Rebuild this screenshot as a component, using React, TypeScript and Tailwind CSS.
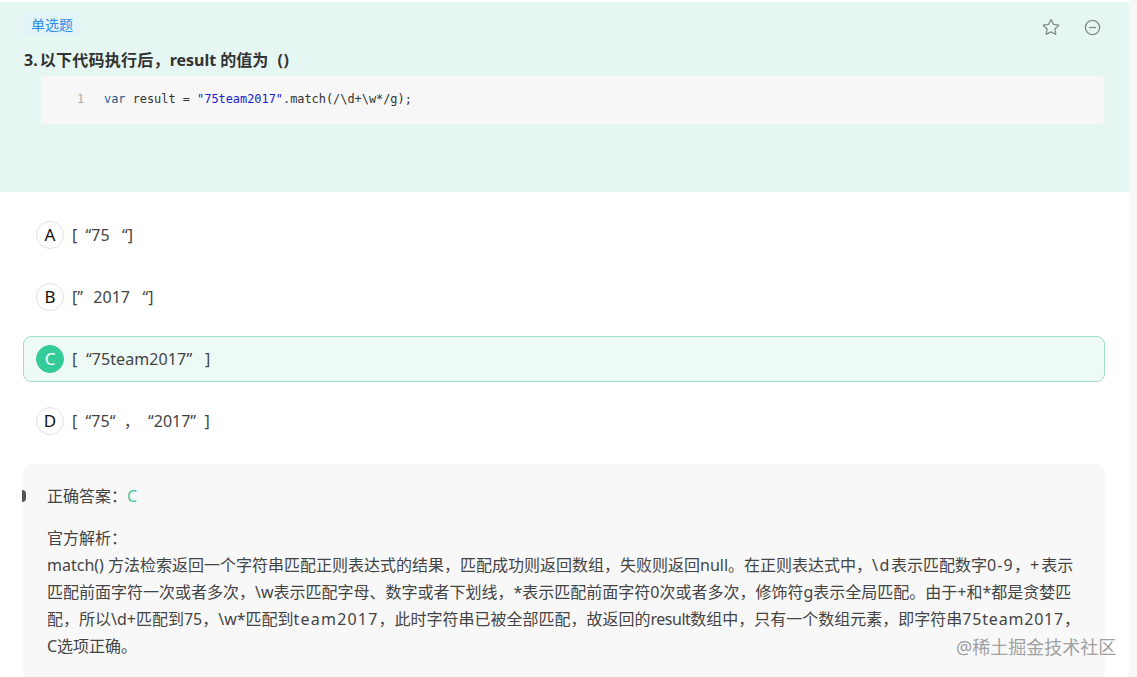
import React from "react";

const font = { fontFamily: '"Noto Sans", "Noto Sans CJK SC", sans-serif' };

function Option({ letter, children, active }: { letter: string; children: React.ReactNode; active?: boolean }) {
  return (
    <div
      className={
        "flex h-[46px] items-center rounded-lg border pl-[12px] " +
        (active ? "border-[#a3dfc9] bg-[#eefaf5]" : "border-transparent")
      }
    >
      <div
        className={
          "flex h-[28px] w-[28px] shrink-0 items-center justify-center rounded-full border text-[17px] " +
          (active ? "border-[#33cb98] bg-[#33cb98] text-white" : "border-[#e2e2e2] bg-white text-[#111]")
        }
      >
        {letter}
      </div>
      <div className="ml-[8px] whitespace-pre text-[16px] text-[#444]">{children}</div>
    </div>
  );
}

export default function App() {
  return (
    <div className="flex h-[677px] w-[1137px] overflow-hidden bg-white" style={font}>
      <div className="w-[1129px] shrink-0">
        <div className="mt-[2px] h-[190px] bg-[#e6f6f2] pl-[24px] pr-[24px]">
          <div className="flex h-[47px] items-start justify-between pt-[13px]">
            <span className="-mt-[1px] rounded-[3px] bg-[#e3f4f8] px-[7px] text-[14px] leading-[22px] text-[#2c8ee8]">单选题</span>
            <div className="mt-[2px] flex items-center gap-[22px] pr-[3px]">
              <svg width="20" height="20" viewBox="0 0 24 24" fill="none" stroke="#868e8c" strokeWidth="1.6" strokeLinejoin="round">
                <path d="M12 3l2.9 5.9 6.5.9-4.7 4.6 1.1 6.5-5.8-3.1-5.8 3.1 1.1-6.5L2.6 9.8l6.5-.9z" />
              </svg>
              <svg width="19" height="19" viewBox="0 0 24 24" fill="none" stroke="#868e8c" strokeWidth="1.7">
                <circle cx="12" cy="12" r="9" />
                <path d="M7.5 12h9" />
              </svg>
            </div>
          </div>
          <div className="whitespace-pre text-[16px] font-bold leading-[22px] text-[#333]">
            3.<span className="ml-[2px] tracking-[0.25px]">以下代码执行后，</span>result 的值为 <span className="ml-[5px] tracking-[0.5px]">()</span>
          </div>
          <div className="ml-[17px] mt-[5px] flex h-[48px] w-[1063px] items-center rounded-[3px] bg-[#f6f7f6] text-[11.9px]" style={{ fontFamily: '"DejaVu Sans Mono", monospace' }}>
            <span className="ml-[36px] w-[27px] text-[#aaa]">1</span>
            <span className="whitespace-pre text-[#333]">
              <span className="text-[#1f5c8f]">var</span> result = <span className="text-[#2020d0]">"75team2017"</span>.match(/\d+\w*/g);
            </span>
          </div>
        </div>

        <div className="ml-[23px] w-[1082px] pt-[20px]">
          <div className="flex flex-col gap-[16px]">
            <Option letter="A">{"[  “75   “]"}</Option>
            <Option letter="B">
              {"[”"}
              <span className="ml-[2px]">{"  2017   “]"}</span>
            </Option>
            <Option letter="C" active>
              <span className="tracking-[0.1px]">{"[  “75team2017”   ]"}</span>
            </Option>
            <Option letter="D">{"[  “75“  ，  “2017”  ]"}</Option>
          </div>
          <div className="mt-[20px] h-[229px] rounded-t-lg bg-[#f8f8f8] pl-[24px] pt-[19px] text-[16px] text-[#444]">
            <div className="relative leading-[27px]">
              <span className="absolute left-[-25px] top-[7px] h-[12px] w-[4px] rounded-r-full bg-[#555]"></span>
              正确答案：<span className="text-[#45c79c]">C</span>
            </div>
            <div className="mt-[15px] whitespace-nowrap leading-[27px]">
              官方解析：
              <br />
              match() 方法检索返回一个字符串匹配正则表达式的结果，匹配成功则返回数组，失败则返回null。在正则表达式中，
              <span className="tracking-[1.5px]">\d</span>表示匹配数字<span className="tracking-[1.2px]">0-9</span>，<span className="tracking-[2px]">+</span>表示
              <br />
              匹配前面字符一次或者多次，\w表示匹配字母、数字或者下划线，*表示匹配前面字符0次或者多次，修饰符g表示全局匹配。由于+和*都是贪婪匹
              <br />
              配，所以\d+匹配到75，\w*匹配到<span className="tracking-[1.2px]">team2017</span>，此时字符串已被全部匹配，故返回的<span className="tracking-[-0.5px]">result</span>数组中，只有一个数组元素，即字符串<span className="tracking-[0.8px]">75team2017</span>，
              <br />
              C选项正确。
            </div>
          </div>
        </div>
      </div>
      <div className="w-[8px] bg-[#f8f8f8]"></div>
      <div className="absolute left-[956px] top-[635px] text-[18px] leading-[24px] text-[#a0a0a0]">@稀土掘金技术社区</div>
    </div>
  );
}
